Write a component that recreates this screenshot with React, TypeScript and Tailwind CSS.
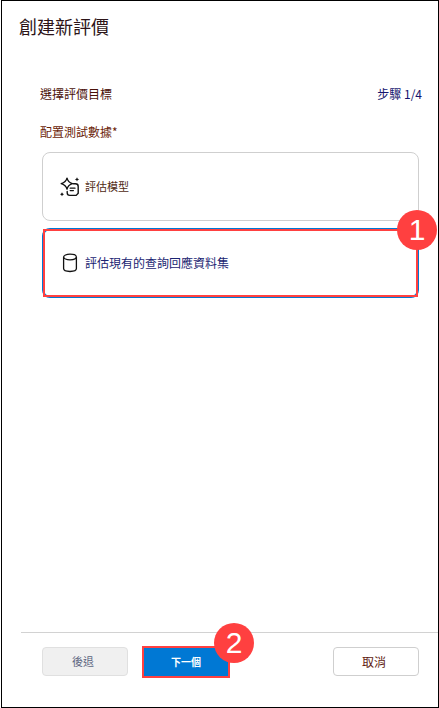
import { useState, type ReactNode } from 'react';

function SparkNoteIcon() {
  return (
    <svg width="20" height="20" viewBox="0 0 20 20" fill="none" stroke="#111" strokeWidth="1.4" strokeLinecap="round" strokeLinejoin="round" aria-hidden="true">
      <path d="M7 1.2C7.8 4.4 9.2 5.7 12.4 6.7C9.2 7.7 7.8 9 7 12.2C6.2 9 4.6 7.7 1.2 6.7C4.6 5.7 6.2 4.4 7 1.2Z" />
      <path d="M13.4 6.8H15.4Q18.2 6.8 18.2 9.4V16.2L16.2 18.4H9.8Q7.2 18.4 7.2 15.8V14.4" />
      <path d="M10.2 11.2H15M10.2 13.6H13.4" strokeWidth="1.3" />
      <path d="M17 0.2L17.7 1.7L19.2 2.4L17.7 3.1L17 4.6L16.3 3.1L14.8 2.4L16.3 1.7ZM2 15.2L2.7 16.5L4 17.2L2.7 17.9L2 19.2L1.3 17.9L0 17.2L1.3 16.5Z" fill="#111" stroke="none" />
    </svg>
  );
}

function CylinderIcon() {
  return (
    <svg width="20" height="20" viewBox="0 0 20 20" fill="none" stroke="#111" strokeWidth="1.3" aria-hidden="true">
      <ellipse cx="10" cy="4" rx="6.4" ry="2.8" />
      <path d="M3.6 4V15.6C3.6 17.2 6.4 18.5 10 18.5S16.4 17.2 16.4 15.6V4" />
    </svg>
  );
}

function Badge({ children }: { children: ReactNode }) {
  return (
    <span className="flex size-10 items-center justify-center rounded-full bg-[#ff4040] font-['Liberation_Sans',sans-serif] text-3xl font-normal text-white">
      {children}
    </span>
  );
}

export default function App() {
  const [target, setTarget] = useState('dataset');

  return (
    <main className="ml-px flex min-h-screen flex-col border border-black bg-white font-['Noto_Sans_CJK_TC',sans-serif] text-xs">
      <h1 className="px-[17px] pt-[11px] text-lg text-[#2c1418]">創建新評價</h1>

      <section className="mt-[46px] pl-[38px] pr-4">
        <div className="flex justify-between">
          <h2 className="text-[#4a1008]">選擇評價目標</h2>
          <p className="text-[#14146e]">步驟 1/4</p>
        </div>
        <fieldset className="mt-[22px]">
          <legend className="text-[#6b2408]">配置測試數據*</legend>
          <div className="ml-0.5 mr-[3px] mt-3 flex flex-col gap-[7px]">
            <label className="relative flex h-[69px] items-center gap-[5px] rounded-lg border border-[#cfcfcf] pl-[17px] text-[11px] text-[#4f2a14]">
              <input type="radio" name="target" className="sr-only" checked={target === 'model'} onChange={() => setTarget('model')} />
              <SparkNoteIcon />
              評估模型
            </label>
            <div className="relative">
              <label className="relative flex h-[70px] items-center gap-[5px] rounded-lg border-2 border-[#0078d4] pl-4 text-[#1a2472]">
                <input type="radio" name="target" className="sr-only" checked={target === 'dataset'} onChange={() => setTarget('dataset')} />
                <CylinderIcon />
                評估現有的查詢回應資料集
              </label>
              <span className="pointer-events-none absolute inset-px border-2 border-[#ff4040]" />
              <span className="absolute -right-[18px] -top-[18px]">
                <Badge>1</Badge>
              </span>
            </div>
          </div>
        </fieldset>
      </section>

      <footer className="ml-[19px] mt-auto flex items-start border-t border-[#d2d2d2] pb-[29px] pl-[21px] pr-[19px] pt-[13px]">
        <button type="button" disabled className="mt-px h-[29px] w-[86px] rounded border border-[#e0e0e0] bg-[#f0f0f0] pr-1 text-[11px] text-[#5c6580]">
          後退
        </button>
        <button type="button" className="relative ml-3.5 h-8 w-[88px] border-2 border-[#ff4040] bg-[#0078d4] text-[10px] font-bold text-white">
          下一個
          <span className="absolute -right-[26px] -top-[25px]">
            <Badge>2</Badge>
          </span>
        </button>
        <button type="button" className="ml-auto mt-px h-[29px] w-[86px] rounded border border-[#cfcfcf] bg-white pr-1 text-[#5e1a10]">
          取消
        </button>
      </footer>
    </main>
  );
}
